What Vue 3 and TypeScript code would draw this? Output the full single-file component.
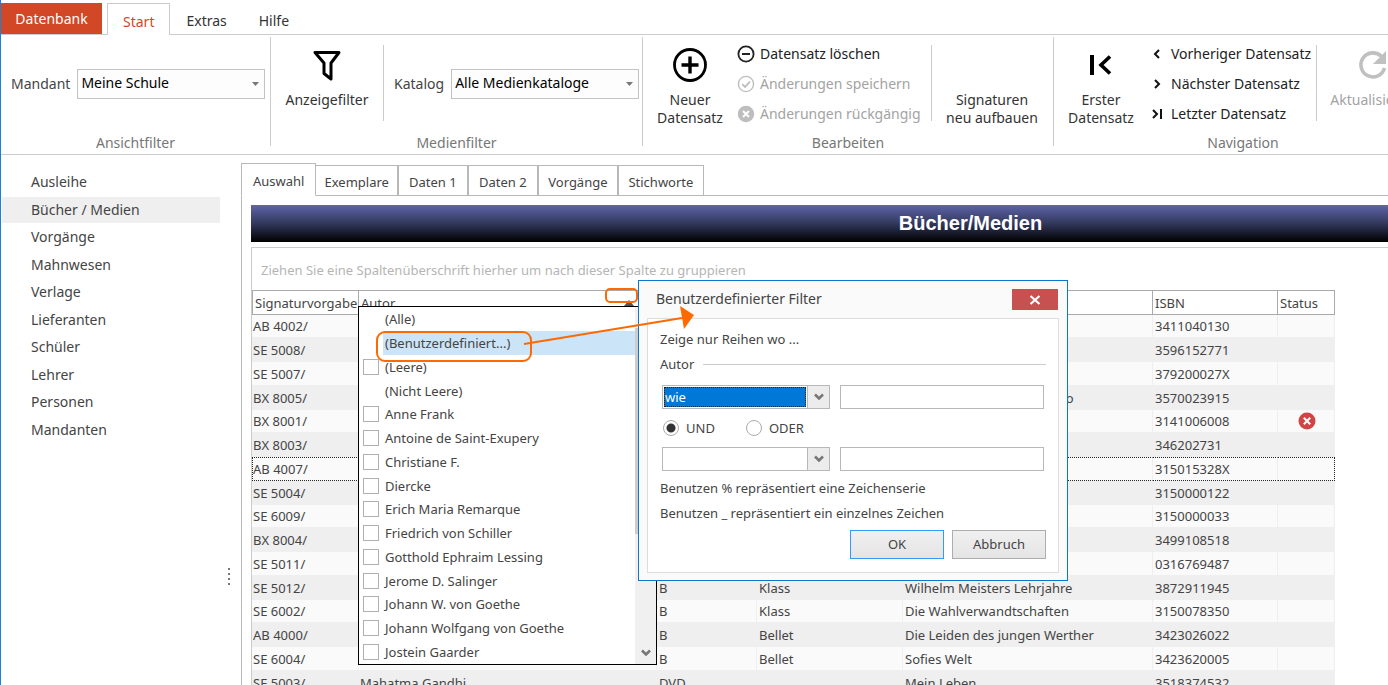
<script setup lang="ts">
import { ref } from 'vue'

interface Row {
  signature: string
  author?: string
  kind?: string
  group?: string
  title?: string
  isbn: string
  blocked?: boolean
}

interface FilterEntry {
  label: string
  box: boolean
}

const mandant = ref('Meine Schule')
const katalog = ref('Alle Medienkataloge')
const operator = ref('wie')
const secondOperator = ref('')
const firstValue = ref('')
const secondValue = ref('')
const link = ref('und')
const focusedRow = 'AB 4007/'
const highlighted = '(Benutzerdefiniert...)'

const navigation: string[] = [
  'Ausleihe', 'Bücher / Medien', 'Vorgänge', 'Mahnwesen', 'Verlage',
  'Lieferanten', 'Schüler', 'Lehrer', 'Personen', 'Mandanten',
]
const activeNavigation = 'Bücher / Medien'

const tabs: string[] = ['Auswahl', 'Exemplare', 'Daten 1', 'Daten 2', 'Vorgänge', 'Stichworte']

const rows: Row[] = [
  { signature: 'AB 4002/', isbn: '3411040130' },
  { signature: 'SE 5008/', isbn: '3596152771' },
  { signature: 'SE 5007/', isbn: '379200027X' },
  { signature: 'BX 8005/', title: 'Wir Kinder vom Bahnhof Zo', isbn: '3570023915' },
  { signature: 'BX 8001/', isbn: '3141006008', blocked: true },
  { signature: 'BX 8003/', isbn: '346202731' },
  { signature: 'AB 4007/', isbn: '315015328X' },
  { signature: 'SE 5004/', isbn: '3150000122' },
  { signature: 'SE 6009/', isbn: '3150000033' },
  { signature: 'BX 8004/', isbn: '3499108518' },
  { signature: 'SE 5011/', isbn: '0316769487' },
  { signature: 'SE 5012/', kind: 'B', group: 'Klass', title: 'Wilhelm Meisters Lehrjahre', isbn: '3872911945' },
  { signature: 'SE 6002/', kind: 'B', group: 'Klass', title: 'Die Wahlverwandtschaften', isbn: '3150078350' },
  { signature: 'AB 4000/', kind: 'B', group: 'Bellet', title: 'Die Leiden des jungen Werther', isbn: '3423026022' },
  { signature: 'SE 6004/', kind: 'B', group: 'Bellet', title: 'Sofies Welt', isbn: '3423620005' },
  { signature: 'SE 5003/', author: 'Mahatma Gandhi', kind: 'DVD', title: 'Mein Leben', isbn: '3518374532' },
]

const entries: FilterEntry[] = [
  { label: '(Alle)', box: false },
  { label: '(Benutzerdefiniert...)', box: false },
  { label: '(Leere)', box: true },
  { label: '(Nicht Leere)', box: false },
  { label: 'Anne Frank', box: true },
  { label: 'Antoine de Saint-Exupery', box: true },
  { label: 'Christiane F.', box: true },
  { label: 'Diercke', box: true },
  { label: 'Erich Maria Remarque', box: true },
  { label: 'Friedrich von Schiller', box: true },
  { label: 'Gotthold Ephraim Lessing', box: true },
  { label: 'Jerome D. Salinger', box: true },
  { label: 'Johann W. von Goethe', box: true },
  { label: 'Johann Wolfgang von Goethe', box: true },
  { label: 'Jostein Gaarder', box: true },
]
</script>

<template>
  <div class="window">
    <nav class="menu">
      <button class="menu-file">Datenbank</button>
      <button class="menu-tab active">Start</button>
      <button class="menu-tab">Extras</button>
      <button class="menu-tab">Hilfe</button>
    </nav>

    <header class="ribbon">
      <section class="group group-view">
        <div class="group-body">
          <label class="field-label" for="mandant">Mandant</label>
          <span class="combo">
            <select id="mandant" v-model="mandant"><option>Meine Schule</option></select>
            <svg class="combo-arrow" viewBox="0 0 8 4"><path d="M0 0h7L3.500 4z" /></svg>
          </span>
        </div>
        <h2>Ansichtfilter</h2>
      </section>

      <section class="group group-media">
        <div class="group-body">
          <button class="big-button wide">
            <svg class="big-icon" viewBox="0 0 36 36" fill="none" stroke="#000" stroke-width="3">
              <path d="M6 5.500h24l-8 10.500v16l-7-5.500V16z" stroke-linejoin="round" />
            </svg>
            <span>Anzeigefilter</span>
          </button>
          <i class="divider"></i>
          <label class="field-label" for="katalog">Katalog</label>
          <span class="combo">
            <select id="katalog" v-model="katalog"><option>Alle Medienkataloge</option></select>
            <svg class="combo-arrow" viewBox="0 0 8 4"><path d="M0 0h7L3.500 4z" /></svg>
          </span>
        </div>
        <h2>Medienfilter</h2>
      </section>

      <section class="group group-edit">
        <div class="group-body">
          <button class="big-button">
            <svg class="big-icon" viewBox="0 0 36 36" fill="none" stroke="#000">
              <circle cx="18" cy="18" r="15.500" stroke-width="2.800" />
              <path d="M18 9.500v17M9.500 18h17" stroke-width="3.400" />
            </svg>
            <span>Neuer<br />Datensatz</span>
          </button>
          <div class="stack stack-edit">
            <button class="small-button">
              <svg viewBox="0 0 18 18" fill="none" stroke="#222"><circle cx="9" cy="9" r="7.600" stroke-width="1.800" /><path d="M5 9h8" stroke-width="2" /></svg>
              Datensatz löschen
            </button>
            <button class="small-button" disabled>
              <svg viewBox="0 0 18 18" fill="none" stroke="#bdbdbd"><circle cx="9" cy="9" r="7.600" stroke-width="1.400" /><path d="M5.200 9.200l2.800 2.700 5-5.200" stroke-width="1.800" /></svg>
              Änderungen speichern
            </button>
            <button class="small-button" disabled>
              <svg viewBox="0 0 18 18" fill="none"><circle cx="9" cy="9" r="8.200" fill="#bdbdbd" /><path d="M6 6l6 6M12 6l-6 6" stroke="#fff" stroke-width="2" /></svg>
              Änderungen rückgängig
            </button>
          </div>
          <i class="divider"></i>
          <button class="big-button rebuild">
            <span>Signaturen<br />neu aufbauen</span>
          </button>
        </div>
        <h2>Bearbeiten</h2>
      </section>

      <section class="group group-nav">
        <div class="group-body">
          <button class="big-button">
            <svg class="big-icon" viewBox="0 0 36 36" fill="none" stroke="#000">
              <path d="M9 8v20" stroke-width="4" />
              <path d="M27 9.500L18 18l9 8.500" stroke-width="3.600" />
            </svg>
            <span>Erster<br />Datensatz</span>
          </button>
          <div class="stack stack-nav">
            <button class="small-button">
              <svg viewBox="0 0 18 18" fill="none" stroke="#111" stroke-width="2"><path d="M11 5L7 9l4 4" /></svg>
              Vorheriger Datensatz
            </button>
            <button class="small-button">
              <svg viewBox="0 0 18 18" fill="none" stroke="#111" stroke-width="2"><path d="M7 5l4 4-4 4" /></svg>
              Nächster Datensatz
            </button>
            <button class="small-button">
              <svg viewBox="0 0 18 18" fill="none" stroke="#111" stroke-width="2"><path d="M5 5l4 4-4 4M13 4v10" /></svg>
              Letzter Datensatz
            </button>
          </div>
          <i class="divider"></i>
          <button class="big-button wide" disabled>
            <svg class="big-icon" viewBox="0 0 36 36" fill="none">
              <path d="M26.500 9.500A12 12 0 1 0 29.500 21" stroke="#c0c0c0" stroke-width="3.600" />
              <path d="M31 4v13H18z" fill="#c0c0c0" />
            </svg>
            <span>Aktualisieren</span>
          </button>
        </div>
        <h2>Navigation</h2>
      </section>
    </header>

    <div class="workspace">
      <aside class="sidebar">
        <ul>
          <li v-for="item in navigation" :key="item">
            <a href="#" :class="{ active: item === activeNavigation }">{{ item }}</a>
          </li>
        </ul>
        <div class="grip"><i></i><i></i><i></i><i></i></div>
      </aside>

      <main class="main">
        <div class="tabs">
          <button v-for="(tab, i) in tabs" :key="tab" :class="{ active: i === 0 }">{{ tab }}</button>
        </div>
        <div class="sheet">
          <h1>Bücher/Medien</h1>
          <div class="grid">
            <p class="group-hint">Ziehen Sie eine Spaltenüberschrift hierher um nach dieser Spalte zu gruppieren</p>
            <table>
              <colgroup>
                <col class="c-signature" /><col class="c-author" /><col class="c-kind" />
                <col class="c-group" /><col class="c-title" /><col class="c-isbn" /><col class="c-status" />
              </colgroup>
              <thead>
                <tr>
                  <th>Signaturvorgabe</th>
                  <th><span class="sortable">Autor<svg viewBox="0 0 10 6"><path d="M5 0l5 6H0z" fill="#555" /></svg></span></th>
                  <th></th><th></th><th></th>
                  <th>ISBN</th>
                  <th>Status</th>
                </tr>
              </thead>
              <tbody>
                <tr v-for="row in rows" :key="row.signature" :class="{ focused: row.signature === focusedRow }">
                  <td>{{ row.signature }}</td>
                  <td>{{ row.author }}</td>
                  <td>{{ row.kind }}</td>
                  <td>{{ row.group }}</td>
                  <td>{{ row.title }}</td>
                  <td>{{ row.isbn }}</td>
                  <td class="status">
                    <svg v-if="row.blocked" viewBox="0 0 18 18"><circle cx="9" cy="9" r="8.500" fill="#d04545" /><path d="M5.800 5.800l6.400 6.400M12.200 5.800l-6.400 6.400" stroke="#fff" stroke-width="2" /></svg>
                  </td>
                </tr>
              </tbody>
            </table>
          </div>
        </div>
      </main>
    </div>

    <div class="filter-list">
      <ul>
        <li v-for="entry in entries" :key="entry.label">
          <label>
            <span class="box"><input v-if="entry.box" type="checkbox" /></span>
            <span class="entry" :class="{ highlighted: entry.label === highlighted }">{{ entry.label }}</span>
          </label>
        </li>
      </ul>
      <div class="scrollbar">
        <div class="thumb"></div>
        <svg viewBox="0 0 10 8" fill="none" stroke="#777" stroke-width="2.600"><path d="M1 1.500l4 4 4-4" /></svg>
      </div>
    </div>

    <form class="dialog" role="dialog" aria-labelledby="dialog-title" @submit.prevent>
      <div class="dialog-head">
        <h2 id="dialog-title">Benutzerdefinierter Filter</h2>
        <button type="button" class="close" aria-label="Schließen">
          <svg viewBox="0 0 12 12" stroke="#fff" stroke-width="2.200"><path d="M1.500 2l9 8M10.500 2l-9 8" /></svg>
        </button>
      </div>
      <div class="dialog-body">
        <p>Zeige nur Reihen wo ...</p>
        <p class="legend"><span>Autor</span></p>
        <div class="condition">
          <span class="picker focused">
            <select v-model="operator" aria-label="Operator"><option>wie</option></select>
            <span class="picker-arrow"><svg viewBox="0 0 10 8" fill="none" stroke="#777" stroke-width="2.600"><path d="M1 1.500l4 4 4-4" /></svg></span>
          </span>
          <input v-model="firstValue" type="text" aria-label="Wert" />
        </div>
        <div class="links">
          <label><input v-model="link" type="radio" value="und" />UND</label>
          <label><input v-model="link" type="radio" value="oder" />ODER</label>
        </div>
        <div class="condition">
          <span class="picker">
            <select v-model="secondOperator" aria-label="Zweiter Operator"><option value=""></option></select>
            <span class="picker-arrow"><svg viewBox="0 0 10 8" fill="none" stroke="#777" stroke-width="2.600"><path d="M1 1.500l4 4 4-4" /></svg></span>
          </span>
          <input v-model="secondValue" type="text" aria-label="Zweiter Wert" />
        </div>
        <div class="hints">
          <p>Benutzen % repräsentiert eine Zeichenserie</p>
          <p>Benutzen _ repräsentiert ein einzelnes Zeichen</p>
        </div>
        <div class="actions">
          <button type="submit" class="default">OK</button>
          <button type="button">Abbruch</button>
        </div>
      </div>
    </form>

    <svg class="marks" viewBox="0 0 330 90" fill="none" stroke="#ff6a00" stroke-width="2">
      <rect x="236" y="9" width="31" height="13" rx="4" />
      <rect x="7" y="52" width="154" height="29" rx="8" />
      <path d="M154 64L312 38" />
      <path d="M310 26l14 9-10 14z" fill="#ff6a00" stroke="none" />
    </svg>
  </div>
</template>

<style>
body {
  margin: 0;
  overflow: hidden;
  background: #fff;
}
</style>

<style scoped>
.window {
  position: relative;
  box-sizing: border-box;
  display: flex;
  flex-direction: column;
  height: 100vh;
  overflow: hidden;
  border-left: 1px solid #1a80d8;
  background: #fff;
  color: #444;
  font: 13px/18px "Noto Sans", "Open Sans", sans-serif;
}
.window *,
.window *::before,
.window *::after { box-sizing: border-box; }
button, select, input {
  margin: 0;
  padding: 0;
  border: 0;
  border-radius: 0;
  background: none;
  color: inherit;
  font: inherit;
}
select { appearance: none; }
h1, h2, p, ul { margin: 0; padding: 0; font: inherit; }
ul { list-style: none; }
svg { display: block; flex: none; }

/* Menu */
.menu {
  display: flex;
  flex: none;
  height: 35px;
  padding-top: 3px;
  border-bottom: 1px solid #ccc;
  font-size: 14px;
}
.menu-file { width: 101px; margin-right: 5px; background: #d24726; color: #fff; }
.menu-tab { padding: 4px 15px 0; border: 1px solid transparent; border-bottom: 0; color: #333; }
.menu-tab.active { margin-bottom: -1px; border-color: #ccc; background: #fff; color: #d24726; }

/* Ribbon */
.ribbon {
  display: flex;
  flex: none;
  height: 120px;
  padding-top: 2px;
  border-bottom: 1px solid #ccc;
  font-size: 14px;
}
.group {
  display: flex;
  flex: none;
  flex-direction: column;
  height: 109px;
  border-right: 1px solid #ccc;
}
.group h2 { margin-top: 10px; color: #777; text-align: center; }
.group-view { width: 270px; }
.group-media { width: 372px; }
.group-edit { width: 411px; }
.group-nav { width: 378px; border: 0; }
.group-body { display: flex; align-items: center; height: 87px; flex: none; }
.field-label { margin: 6px 7px 0 10px; }
.combo { position: relative; display: flex; margin-top: 6px; }
.combo select {
  width: 188px;
  height: 30px;
  padding: 0 20px 2px 3px;
  border: 1px solid #c3c3c3;
  background: #fdfdfd;
  color: #000;
}
.combo-arrow { position: absolute; right: 5px; top: 13px; width: 8px; height: 4px; fill: #777; }
.divider { align-self: flex-start; flex: none; width: 1px; height: 76px; margin-top: 8px; background: #ccc; }
.big-button {
  display: flex;
  flex: none;
  flex-direction: column;
  align-items: center;
  align-self: flex-start;
  width: 94px;
  padding-top: 10px;
  color: #333;
}
.big-button.wide { width: 112px; }
.big-button.rebuild { width: 120px; padding-top: 54px; }
.big-icon { width: 36px; height: 36px; margin-bottom: 8px; }
.stack { display: flex; flex: none; flex-direction: column; align-self: flex-start; padding-top: 2px; }
.stack-edit { width: 194px; }
.stack-nav { width: 168px; }
.small-button { display: flex; align-items: center; gap: 5px; height: 30px; color: #222; white-space: nowrap; }
.small-button svg { width: 18px; height: 18px; }
button:disabled { color: #a3a3a3; }

/* Sidebar */
.workspace { display: flex; flex: 1; min-height: 0; }
.sidebar { display: flex; flex: none; justify-content: space-between; width: 240px; padding: 14px 11px 0 1px; font-size: 14px; }
.sidebar ul { width: 218px; }
.sidebar li { height: 28px; }
.sidebar li:nth-child(even) { height: 27px; }
.sidebar a {
  display: flex;
  align-items: center;
  height: 26px;
  padding-left: 29px;
  color: #444;
  text-decoration: none;
}
.sidebar a.active { background: #efefef; }
.grip { display: flex; flex-direction: column; gap: 3px; margin-top: 399px; }
.grip i { width: 2px; height: 2px; background: #777; }

/* Main area */
.main { display: flex; flex: 1; flex-direction: column; min-width: 0; padding-top: 8px; }
.tabs { display: flex; align-items: flex-end; flex: none; height: 33px; border-bottom: 1px solid #b8b8b8; }
.tabs button { min-width: 70px; height: 31px; margin-bottom: -1px; padding: 3px 8px 0; border: 1px solid #b8b8b8; }
.tabs button.active { height: 33px; padding: 3px 11px 0; border-bottom-color: #fff; background: #fff; }
.tabs button:nth-child(2) { border-left: 0; }
.tabs button:nth-child(5) { min-width: 80px; }
.tabs button:nth-child(6) { min-width: 86px; }
.sheet { flex: 1; min-height: 0; padding: 9px 0 0 9px; border-left: 1px solid #b8b8b8; overflow: hidden; }
h1 {
  height: 37px;
  padding-left: 302px;
  background: linear-gradient(#5f65a8, #32385c 50%, #000);
  color: #fff;
  font: bold 20px/36px "Liberation Sans", Arial, sans-serif;
  text-align: center;
}
.grid { margin-top: 5px; border: 1px solid #ccc; border-right: 0; white-space: nowrap; }
.group-hint { height: 42px; padding: 13px 9px 0; color: #b5b5b5; }
table { width: 1083px; table-layout: fixed; border-collapse: separate; border-spacing: 0; }
.c-signature { width: 107px; }
.c-author { width: 298px; }
.c-kind { width: 100px; }
.c-group { width: 146px; }
.c-title { width: 250px; }
.c-isbn { width: 125px; }
.c-status { width: 57px; }
th {
  height: 25px;
  padding: 0 2px;
  border: solid #aaa;
  border-width: 1px 1px 1px 0;
  font-weight: normal;
  text-align: left;
}
th:first-child { border-left-width: 1px; }
.sortable { display: flex; align-items: center; justify-content: space-between; padding-right: 20px; }
.sortable svg { width: 10px; height: 6px; }
tbody tr { height: 24px; background: #fafafa; }
tbody tr:nth-child(4n + 1) { height: 23px; }
tbody tr:nth-child(even) { background: #efefef; }
td { padding: 0 1px; border-right: 1px solid #efefef; border-bottom: 1px solid #efefef; }
td:nth-child(n + 3) { padding-left: 2px; }
.focused td { border-top: 1px dotted #222; border-bottom: 1px dotted #222; }
.focused td:first-child { border-left: 1px dotted #222; padding-left: 0; }
.focused td:last-child { border-right: 1px dotted #222; }
.status svg { width: 18px; height: 18px; margin: 0 auto; }

/* Column filter drop-down */
.filter-list {
  position: absolute;
  left: 357px;
  top: 306px;
  display: flex;
  width: 299px;
  height: 359px;
  border: 1px solid #000;
  background: #fff;
}
.filter-list ul { flex: 1; }
.filter-list li { height: 24px; }
.filter-list li:nth-child(4n) { height: 23px; }
.filter-list label { display: flex; align-items: center; height: 100%; padding-left: 4px; }
.box { display: flex; flex: none; width: 20px; }
.box input { appearance: none; width: 16px; height: 16px; border: 1px solid #b0b0b0; background: #fff; }
.entry { flex: 1; height: 100%; padding-left: 2px; line-height: 24px; }
.entry.highlighted { background: #cce4f7; }
.scrollbar {
  display: flex;
  flex-direction: column;
  align-items: center;
  justify-content: space-between;
  width: 21px;
  padding: 21px 0 7px;
  background: #f0f0f0;
}
.thumb { width: 100%; height: 206px; background: #cdcdcd; }
.scrollbar svg { width: 10px; height: 8px; }

/* Filter dialog */
.dialog {
  position: absolute;
  left: 637px;
  top: 280px;
  width: 430px;
  padding: 8px 8px 7px;
  border: 1px solid #0a78d0;
  background: #fafafa;
}
.dialog-head { display: flex; justify-content: space-between; padding: 0 1px 0 9px; }
.dialog-head h2 { font-size: 14px; line-height: 20px; }
.close { display: flex; align-items: center; justify-content: center; width: 46px; height: 21px; background: #c75050; }
.close svg { width: 12px; height: 12px; }
.dialog-body { margin-top: 8px; padding: 8px 12px 13px 12px; border: 1px solid #ddd; background: #fff; }
.dialog-body p { line-height: 25px; }
.legend { display: flex; align-items: center; gap: 9px; }
.legend::after { flex: 1; height: 1px; background: #ccc; content: ""; }
.condition { display: flex; gap: 10px; padding: 0 2px; }
.legend + .condition { margin-top: 8px; }
.condition > input { flex: 1; min-width: 0; height: 24px; border: 1px solid #b8b8b8; background: #fff; }
.picker { display: flex; width: 168px; height: 24px; border: 1px solid #b8b8b8; }
.picker select { flex: 1; min-width: 0; }
.picker.focused select { margin: 1px; background: #0078d7; color: #fff; outline: 1px dotted #222; outline-offset: -1px; padding-left: 1px; }
.picker-arrow {
  display: flex;
  align-items: center;
  justify-content: center;
  width: 22px;
  border-left: 1px solid #b8b8b8;
  background: #ececec;
  pointer-events: none;
}
.picker-arrow svg { width: 10px; height: 8px; }
.links { display: flex; gap: 31px; height: 38px; padding: 0 3px 1px; }
.links label { display: flex; align-items: center; gap: 7px; }
.links input {
  appearance: none;
  width: 16px;
  height: 16px;
  border: 1px solid #aaa;
  border-radius: 50%;
  background: #fff;
}
.links input:checked { background: radial-gradient(#333 4px, #fff 5px); }
.hints { padding-top: 5px; }
.actions { display: flex; justify-content: flex-end; gap: 8px; margin-top: 4px; }
.actions button { width: 94px; height: 29px; padding-bottom: 1px; border: 1px solid #adadad; background: linear-gradient(#f0f0f0, #e4e4e4); }
.actions .default { border-color: #3399ff; }

/* Callouts */
.marks { position: absolute; left: 369px; top: 280px; width: 330px; height: 90px; pointer-events: none; }
</style>
